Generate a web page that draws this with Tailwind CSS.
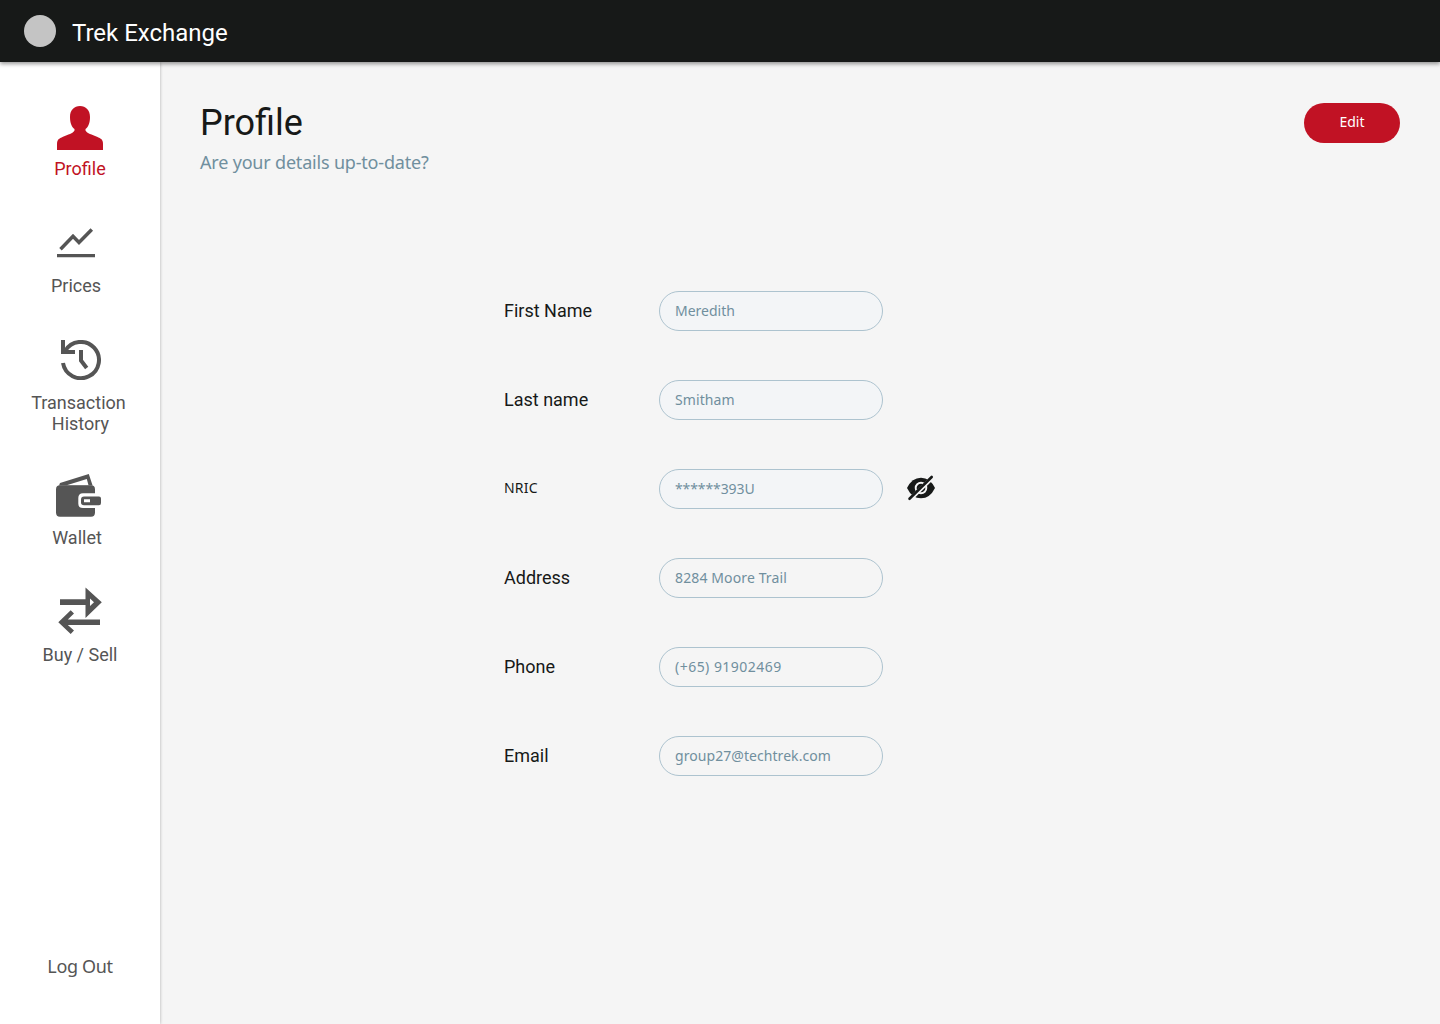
<!DOCTYPE html>
<html lang="en">
<head>
<meta charset="utf-8">
<title>Trek Exchange</title>
<script src="https://cdn.jsdelivr.net/npm/@tailwindcss/browser@4"></script>
</head>
<body class="flex h-screen flex-col overflow-hidden bg-[#f5f5f5] font-['Roboto',sans-serif] text-[#171918]">
  <header class="relative z-20 flex h-[62px] shrink-0 items-center bg-[#171918] pl-6 shadow-[0_2px_4px_rgba(0,0,0,0.4)]">
    <div class="size-8 rounded-full bg-[#c4c4c4]"></div>
    <span class="ml-4 mt-1 text-2xl leading-7 text-white">Trek Exchange</span>
  </header>
  <div class="flex min-h-0 flex-1">
    <nav class="z-10 flex w-40 shrink-0 flex-col items-center bg-white pt-11 pb-[47px] text-lg leading-[21px] text-[#555] shadow-[0_0_3px_rgba(0,0,0,0.3)]">
      <a class="flex flex-col items-center gap-2 text-[#c11224]">
        <svg class="h-11 w-[46px]" viewBox="57 106 46 44" fill="currentColor"><path d="M80 106C85.800 106 90 110 90 117C90 123 88.200 127 85.500 129V130.500C87 133.500 92 134.500 97 136.800C101 138.600 103 139.500 103 144V150H57V144C57 139.500 59 138.600 63 136.800C68 134.500 73 133.500 74.500 130.500V129C71.800 127 70 123 70 117C70 110 74.200 106 80 106Z"/></svg>
        <span>Profile</span>
      </a>
      <a class="mt-[49px] mr-2 flex flex-col items-center gap-[17px]">
        <svg class="h-[30px] w-[38px]" viewBox="57 228 38 30" fill="none" stroke="currentColor" stroke-width="3.500"><path d="M60.500 249.200L73 236.300L79 242.500L91.800 229.500"/><path stroke-width="3.200" d="M57 255.700H95"/></svg>
        <span>Prices</span>
      </a>
      <a class="mt-11 flex flex-col items-center gap-3">
        <svg class="ml-0.5 h-10 w-10" viewBox="61 340 40 40" fill="none" stroke="currentColor" stroke-width="4"><path d="M63 363A18.100 18.100 0 1 0 65.200 351M63 340V352H75M81 350V360.500L86.700 368"/></svg>
        <span class="mr-[3px] text-center">Transaction<br><span class="ml-1">History</span></span>
      </a>
      <a class="mt-10 flex flex-col items-center gap-2.5">
        <svg class="mr-px h-[43px] w-[46px]" viewBox="56 474 46 43" fill="currentColor"><path fill-rule="evenodd" d="M59 485.500L60 483L88.800 474L92.600 485.500ZM66.700 485.300H88.500L86.800 479Z"/><path d="M60 485.300H91Q95 485.300 95 489.500V493.300H83Q78.300 493.300 78.300 498V503.500Q78.300 508 83 508H95V512.500Q95 516.700 91 516.700H60Q56 516.700 56 512.500V489.500Q56 485.300 60 485.300Z"/><path fill-rule="evenodd" d="M84 496.500H99Q101 496.500 101 498.500V503Q101 505.200 99 505.200H84Q81 505.200 81 502.500V499.500Q81 496.500 84 496.500ZM84 499.200V502.200H90V499.200Z"/></svg>
        <span class="mr-1.5">Wallet</span>
      </a>
      <a class="mt-[39px] flex flex-col items-center gap-2.5">
        <svg class="h-[47px] w-11" viewBox="58 587 44 47" fill="currentColor"><path fill-rule="evenodd" d="M60 599.300H85.500V587.500L101.800 602.200L85.500 618V605H60ZM90 598.500V606L94 602.200Z"/><path d="M58.300 622.300L70.700 610.300L74 613.500L67.800 619.400H100V625H67.800L74 630.500L70.700 634Z"/></svg>
        <span>Buy / Sell</span>
      </a>
      <a class="mt-auto font-['Noto_Sans',sans-serif] tracking-[-0.35px]">Log Out</a>
    </nav>
    <main class="min-w-0 flex-1 px-10 pt-[39px]">
      <div class="flex items-start justify-between">
        <div>
          <h1 class="mt-px text-4xl leading-[42px]">Profile</h1>
          <p class="mt-1.5 font-['Noto_Sans',sans-serif] text-lg leading-6 tracking-[-0.19px] text-[#708f9e]">Are your details up-to-date?</p>
        </div>
        <button class="mt-0.5 h-10 w-24 rounded-full bg-[#c11224] pb-0.5 font-['Noto_Sans',sans-serif] text-sm text-white">Edit</button>
      </div>
      <div class="mt-[117px] ml-[304px] grid grid-cols-[155px_224px_1fr] items-center gap-y-[49px] text-lg leading-6">
        <label>First Name</label>
        <div class="flex h-10 items-center rounded-full border border-[#adc3cf] bg-[#f3f5f7] px-[15px] font-['Noto_Sans',sans-serif] text-sm text-[#708f9e]">Meredith</div><i></i>
        <label>Last name</label>
        <div class="flex h-10 items-center rounded-full border border-[#adc3cf] bg-[#f3f5f7] px-[15px] font-['Noto_Sans',sans-serif] text-sm tracking-[0.1px] text-[#708f9e]">Smitham</div><i></i>
        <label class="pb-0.5 font-['Noto_Sans',sans-serif] text-sm tracking-[0.2px]">NRIC</label>
        <div class="flex h-10 items-center rounded-full border border-[#adc3cf] bg-[#f3f5f7] px-[15px] font-['Noto_Sans',sans-serif] text-sm tracking-[-0.1px] text-[#708f9e]">******393U</div>
        <svg class="mb-0.5 ml-6 h-[26px] w-7" viewBox="907 475 28 26" fill="none"><path fill="#171918" d="M907 488Q912 477.700 921 477.700T935 488Q930 498.300 921 498.300T907 488Z"/><circle cx="921" cy="488" r="5.300" stroke="#f5f5f5" stroke-width="1.900"/><path stroke="#f5f5f5" stroke-width="4.200" d="M908.500 501L934.500 475.500"/><path stroke="#171918" stroke-width="2.600" stroke-linecap="round" d="M909.500 498.800L931.700 477"/></svg>
        <label>Address</label>
        <div class="flex h-10 items-center rounded-full border border-[#adc3cf] px-[15px] font-['Noto_Sans',sans-serif] text-sm tracking-[0.12px] text-[#708f9e]">8284 Moore Trail</div><i></i>
        <label>Phone</label>
        <div class="flex h-10 items-center rounded-full border border-[#adc3cf] px-[15px] font-['Noto_Sans',sans-serif] text-sm tracking-[0.47px] text-[#708f9e]">(+65) 91902469</div><i></i>
        <label>Email</label>
        <div class="flex h-10 items-center rounded-full border border-[#adc3cf] px-[15px] font-['Noto_Sans',sans-serif] text-sm tracking-[0.06px] text-[#708f9e]">group27@techtrek.com</div><i></i>
      </div>
    </main>
  </div>
</body>
</html>
